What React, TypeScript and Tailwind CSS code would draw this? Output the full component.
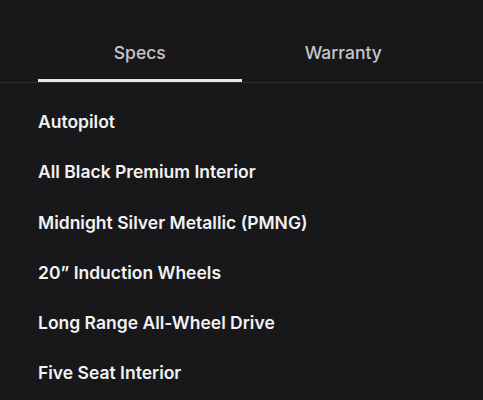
import React, { useState } from "react";

const specs = [
  "Autopilot",
  "All Black Premium Interior",
  "Midnight Silver Metallic (PMNG)",
  "20” Induction Wheels",
  "Long Range All-Wheel Drive",
  "Five Seat Interior",
];

const App: React.FC = () => {
  const [tab, setTab] = useState<"specs" | "warranty">("specs");

  return (
    <div
      className="min-h-screen w-full bg-[#18181a] text-white"
      style={{ fontFamily: "Inter, 'Liberation Sans', sans-serif" }}
    >
      {/* Tabs */}
      <div className="border-b border-[#2b2b2d]">
        <div className="flex px-[38px]">
          <button
            onClick={() => setTab("specs")}
            className={`flex-1 h-[82px] flex items-end justify-center pb-[16px] text-[17.5px] leading-[20px] font-medium text-[#c6c6c8] border-b-[3px] ${
              tab === "specs" ? "border-[#e6e6e6]" : "border-transparent"
            }`}
          >
            Specs
          </button>
          <button
            onClick={() => setTab("warranty")}
            className={`flex-1 h-[82px] flex items-end justify-center pb-[16px] text-[17.5px] leading-[20px] font-medium text-[#c6c6c8] border-b-[3px] ${
              tab === "warranty" ? "border-[#e6e6e6]" : "border-transparent"
            }`}
          >
            Warranty
          </button>
        </div>
      </div>

      {/* Spec list */}
      <ul className="px-[38px] pt-[26px]">
        {specs.map((s) => (
          <li
            key={s}
            className="h-[50.3px] flex items-start text-[17.5px] font-semibold text-[#f2f2f2] leading-[26px]"
          >
            {s}
          </li>
        ))}
      </ul>
    </div>
  );
};

export default App;
